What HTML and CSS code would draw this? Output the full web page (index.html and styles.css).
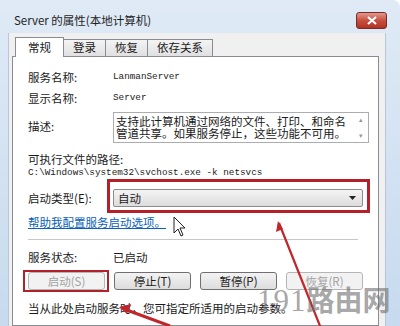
FILE: index.html
```html
<!DOCTYPE html>
<html lang="zh-CN">
<head>
  <meta charset="UTF-8">
  <title>Server 的属性</title>
  <link rel="stylesheet" href="styles.css">
</head>
<body>
  <div class="window">
    <div class="titlebar">
      <span class="title">Server 的属性(本地计算机)</span>
      <span class="close">
        <svg width="12" height="9" viewBox="0 0 12 9"><path d="M2 1 L10 8 M10 1 L2 8" stroke="#fff" stroke-width="2.2"/></svg>
      </span>
    </div>

    <div class="client">
      <div class="tabs">
        <span class="tab active">常规</span>
        <span class="tab">登录</span>
        <span class="tab">恢复</span>
        <span class="tab">依存关系</span>
      </div>

      <div class="panel">
        <div class="row">
          <span class="label">服务名称:</span>
          <span class="mono">LanmanServer</span>
        </div>
        <div class="row">
          <span class="label">显示名称:</span>
          <span class="mono">Server</span>
        </div>
        <div class="row desc-row">
          <span class="label">描述:</span>
          <div class="desc">
            <div class="desc-text">支持此计算机通过网络的文件、打印、和命名管道共享。如果服务停止，这些功能不可用。</div>
            <div class="scroll">
              <span>&#9652;</span>
              <span>&#9662;</span>
            </div>
          </div>
        </div>

        <div class="path-label">可执行文件的路径:</div>
        <div class="mono path">C:\Windows\system32\svchost.exe -k netsvcs</div>

        <div class="row startup">
          <span class="label">启动类型(E):</span>
          <div class="select">
            <span>自动</span>
            <svg width="7" height="4" viewBox="0 0 7 4"><path d="M0 0 H7 L3.5 4 Z" fill="#222"/></svg>
          </div>
        </div>

        <a class="help">帮助我配置服务启动选项。</a>

        <div class="sep"></div>

        <div class="row status">
          <span class="label">服务状态:</span>
          <span>已启动</span>
        </div>

        <div class="buttons">
          <span class="btn disabled">启动(S)</span>
          <span class="btn">停止(T)</span>
          <span class="btn">暂停(P)</span>
          <span class="btn disabled">恢复(R)</span>
        </div>

        <div class="hint">当从此处启动服务时，您可指定所适用的启动参数。</div>
      </div>
    </div>

    <!-- annotations drawn over the dialog -->
    <div class="mark mark-select"></div>
    <div class="mark mark-start"></div>

    <svg class="arrows" width="400" height="326" viewBox="0 0 400 326">
      <path d="M279 223 L320 326" stroke="#c0262a" stroke-width="2.2" fill="none"/>
      <path d="M278 221 L276 232 L283 229 Z" fill="#c0262a"/>
      <path d="M124 309 L170 326" stroke="#c0262a" stroke-width="3" fill="none"/>
      <path d="M119 307 L131 304 L127 314 Z" fill="#c0262a"/>
      <path d="M174 217 L174 233 L178 229 L181 236 L183 235 L180 228 L185 228 Z" fill="#fff" stroke="#222" stroke-width="1"/>
    </svg>

    <div class="watermark"><span class="num">191</span>路由网</div>
  </div>
</body>
</html>
```

FILE: styles.css
```css
body {
  margin: 0;
  font-family: "Noto Sans CJK SC", "Noto Sans", sans-serif;
  font-size: 11.5px;
  color: #1a1a1a;
}

.window {
  position: relative;
  width: 400px;
  height: 326px;
  overflow: hidden;
  background: linear-gradient(#dfeaf6, #c7daee);
  border-top-right-radius: 7px;
  display: flex;
  flex-direction: column;
}

.titlebar {
  height: 33px;
  display: flex;
  align-items: flex-start;
  padding: 12px 13px 0 14px;
  box-sizing: border-box;
  justify-content: space-between;
}

.title {
  font-size: 11.5px;
  line-height: 16px;
  color: #1e1e1e;
}

.close {
  width: 29px;
  height: 15px;
  border-radius: 3px;
  border: 1px solid #7a2a2a;
  background: linear-gradient(#e09a8e, #c8503f 50%, #b03424);
  display: flex;
  align-items: center;
  justify-content: center;
}

.client {
  flex: 1;
  margin: 0 14px 0 8px;
  background: #f0f0f0;
  border-left: 1px solid #b9c6d6;
  border-right: 1px solid #b9c6d6;
  display: flex;
  flex-direction: column;
}

.tabs {
  display: flex;
  align-items: flex-end;
  height: 23px;
  padding-left: 7px;
}

.tab {
  height: 17px;
  padding: 0 9px;
  border: 1px solid #898c95;
  border-bottom: none;
  margin-left: -1px;
  background: linear-gradient(#f4f4f4, #e0e0e0);
  display: flex;
  align-items: center;
  box-sizing: border-box;
  line-height: 1;
}

.tab.active {
  height: 20px;
  padding: 0 12px;
  background: #fff;
  position: relative;
  z-index: 1;
  margin-bottom: -1px;
}

.panel {
  flex: 1;
  margin: 0 6px 0 3px;
  background: #fff;
  border: 1px solid #898c95;
  padding: 9px 0 0 15px;
  display: flex;
  flex-direction: column;
}

.row {
  display: flex;
  align-items: center;
  height: 21px;
}

.label {
  width: 85px;
  flex-shrink: 0;
}

.mono {
  font-family: "Liberation Mono", "DejaVu Sans Mono", monospace;
  font-size: 9.3px;
  color: #222;
}

.desc-row {
  height: auto;
  align-items: flex-start;
  margin-top: 4px;
}

.desc-row .label {
  padding-top: 6px;
}

.desc {
  width: 256px;
  height: 31px;
  box-sizing: border-box;
  border: 1px solid #abadb3;
  display: flex;
}

.desc-text {
  flex: 1;
  line-height: 12px;
  padding: 2px 0 0 2px;
  font-size: 11.5px;
  overflow: hidden;
}

.scroll {
  width: 15px;
  display: flex;
  flex-direction: column;
  justify-content: space-between;
  align-items: center;
  color: #999;
  font-size: 7px;
  line-height: 1;
  padding: 3px 0;
}

.path-label {
  margin-top: 9px;
  line-height: 14px;
}

.path {
  line-height: 13px;
}

.startup {
  margin-top: 10px;
  height: 18px;
}

.select {
  width: 250px;
  height: 18px;
  box-sizing: border-box;
  border: 1px solid #8c8c8c;
  border-radius: 2px;
  background: linear-gradient(#f4f4f4, #dcdcdc);
  display: flex;
  align-items: center;
  justify-content: space-between;
  padding: 0 6px 0 4px;
}

.help {
  margin-top: 8px;
  line-height: 14px;
  color: #0a5fb8;
  text-decoration: underline;
}

.sep {
  margin: 10px 20px 0 0;
  border-top: 1px solid #c8c8c8;
}

.status {
  margin-top: 10px;
  height: 14px;
}

.buttons {
  display: flex;
  gap: 9px;
  margin-top: 8px;
}

.btn {
  width: 77px;
  height: 18px;
  box-sizing: border-box;
  border: 1px solid #707070;
  border-radius: 3px;
  background: linear-gradient(#f3f3f3, #dddddd);
  display: flex;
  align-items: center;
  justify-content: center;
}

.btn.disabled {
  color: #a3a3a3;
  border-color: #b5b5b5;
  background: #f2f2f2;
}

.hint {
  margin-top: 11px;
  line-height: 14px;
}

.mark {
  position: absolute;
  border: 3px solid #b3202a;
  box-sizing: border-box;
}

.mark-select {
  left: 107px;
  top: 179px;
  width: 263px;
  height: 34px;
}

.mark-start {
  left: 23px;
  top: 270px;
  width: 86px;
  height: 22px;
  border-width: 2px;
}

.arrows {
  position: absolute;
  left: 0;
  top: 0;
}

.watermark {
  position: absolute;
  left: 257px;
  top: 281px;
  font-size: 28px;
  font-weight: bold;
  color: rgba(110, 110, 110, 0.62);
  letter-spacing: 0;
  line-height: 36px;
}

.watermark .num {
  font-family: "Liberation Serif", serif;
  font-weight: normal;
  font-size: 31px;
  letter-spacing: 1px;
}
```
